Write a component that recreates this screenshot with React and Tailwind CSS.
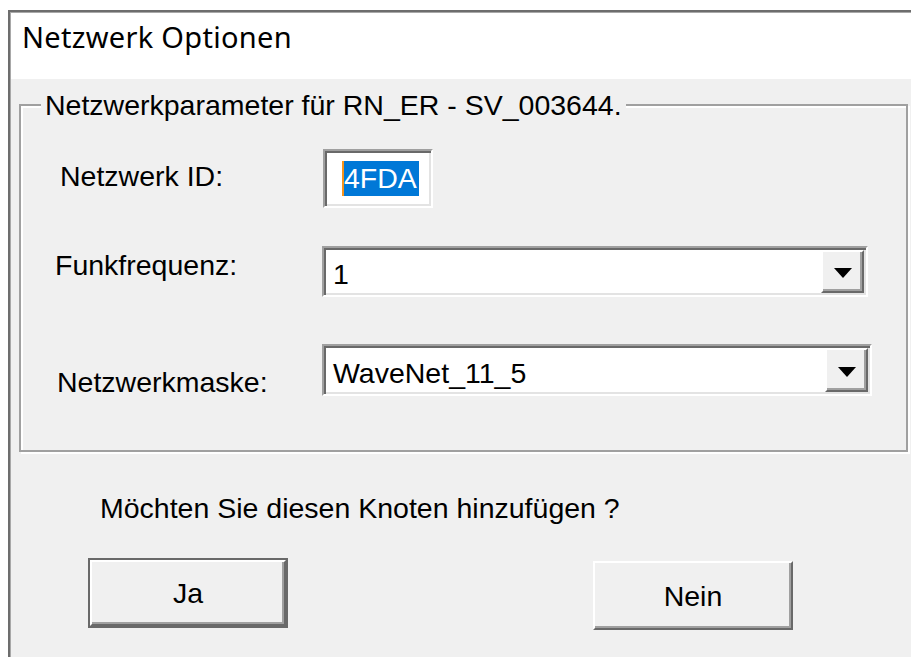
import React from "react";

const sunken =
  "border-2 border-t-[#a0a0a0] border-l-[#a0a0a0] border-b-white border-r-white shadow-[inset_2px_2px_0_#696969,inset_-2px_-2px_0_#e3e3e3] bg-white";
const raised =
  "border-2 border-t-white border-l-white border-b-[#696969] border-r-[#696969] shadow-[inset_-2px_-2px_0_#a0a0a0] bg-[#f0f0f0]";

function DropArrow() {
  return (
    <svg width="18" height="10" viewBox="0 0 18 10" className="mt-[3px]">
      <polygon points="0,0 18,0 9,10" fill="#000" />
    </svg>
  );
}

function ComboBox({ value, width, height }) {
  return (
    <div className={`${sunken} flex p-[2px] ${width} ${height}`}>
      <div className="flex flex-1 items-center pl-[7px] pt-[5px] leading-[32px]">{value}</div>
      <div className={`${raised} flex w-[43px] items-center justify-center`}>
        <DropArrow />
      </div>
    </div>
  );
}

export default function App() {
  return (
    <div
      className="h-[657px] w-[911px] overflow-hidden bg-white text-[28.5px] text-black"
      style={{ fontFamily: '"Liberation Sans", Arial, sans-serif' }}
    >
      <div className="ml-[8px] mt-[10px] h-[647px] border-l-2 border-t-2 border-[#6d6d6d]">
        <div className="flex h-full flex-col border-l border-t border-[#a8a8a8]">
          {/* caption */}
          <div className="h-[66px] bg-white pl-[11px] pt-[9px]">
            <h1
              className="text-[29px] leading-[30px] tracking-[0.3px] text-black"
              style={{ fontFamily: '"Noto Sans", "Open Sans", sans-serif' }}
            >
              Netzwerk Optionen
            </h1>
          </div>

          {/* dialog body */}
          <div className="flex-1 bg-[#f0f0f0]">
            <fieldset className="ml-[8px] mt-[12px] h-[361px] w-[889px] border-2 border-[#a0a0a0] shadow-[inset_2px_2px_0_#fff,2px_2px_0_#fff]">
              <legend className="ml-[20px] bg-[#f0f0f0] px-[4px] leading-[28px]">
                Netzwerkparameter für RN_ER - SV_003644.
              </legend>

              <div className="mt-[30px] flex">
                <div className="w-[302px] pl-[39px] pt-[11px] leading-[32px]">Netzwerk ID:</div>
                <div className={`${sunken} h-[59px] w-[110px] pl-[17px] pt-[6px]`}>
                  <span className="inline-block h-[35px] bg-[#0078d7] px-[2px] leading-[35px] text-white shadow-[inset_2px_0_0_#f7941d]">
                    4FDA
                  </span>
                </div>
              </div>

              <div className="mt-[38px] flex">
                <div className="w-[301px] pl-[34px] pt-[3px] leading-[32px]">Funkfrequenz:</div>
                <ComboBox value="1" width="w-[546px]" height="h-[51px]" />
              </div>

              <div className="mt-[47px] flex">
                <div className="w-[301px] pl-[36px] pt-[22px] leading-[32px]">Netzwerkmaske:</div>
                <ComboBox value="WaveNet_11_5" width="w-[550px]" height="h-[52px]" />
              </div>
            </fieldset>

            <p className="mt-[40px] pl-[89px] leading-[32px]">Möchten Sie diesen Knoten hinzufügen ?</p>

            <div className="mt-[34px] flex items-start">
              <div className="ml-[77px] h-[70px] w-[200px] border-2 border-[#696969]">
                <button className={`${raised} flex h-full w-full items-center justify-center leading-[32px]`}>
                  Ja
                </button>
              </div>
              <button
                className={`${raised} ml-[305px] mt-[3px] flex h-[69px] w-[200px] items-center justify-center leading-[32px]`}
              >
                Nein
              </button>
            </div>
          </div>
        </div>
      </div>
    </div>
  );
}
